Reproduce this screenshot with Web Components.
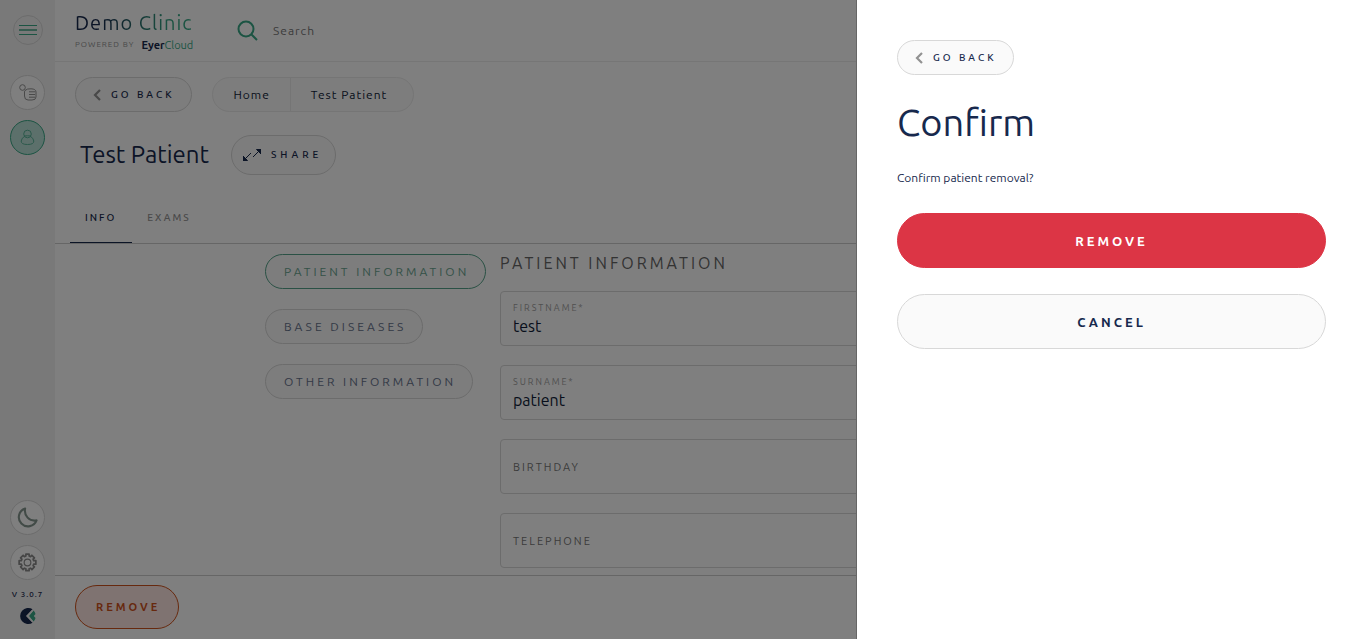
<!DOCTYPE html>
<html lang="en">
<head>
<meta charset="utf-8">
<meta name="viewport" content="width=device-width, initial-scale=1">
<title>Demo Clinic - Test Patient</title>
<style>
  :root {
    --navy: #17294d;
    --green: #38a886;
    --line: #d8d8d8;
    --pill: #fafafa;
    --danger: #dc3545;
  }
  body {
    margin: 0;
    font: 12px/16px Ubuntu, "Noto Sans", sans-serif;
    color: var(--navy);
  }
</style>
</head>
<body>
<clinic-app>
  <side-rail slot="rail"></side-rail>
  <top-bar slot="top"></top-bar>
  <patient-page></patient-page>
  <confirm-drawer slot="drawer" heading="Confirm" message="Confirm patient removal?"></confirm-drawer>
</clinic-app>

<script>
const define = (name, html) => {
  const template = document.createElement('template');
  template.innerHTML = '<style>:host,*{box-sizing:border-box}button,input{font:inherit;color:inherit;letter-spacing:inherit}svg{display:block;fill:none}</style>' + html;
  customElements.define(name, class extends HTMLElement {
    constructor() {
      super();
      this.attachShadow({ mode: 'open' }).append(template.content.cloneNode(true));
    }
    connectedCallback() {
      for (const el of this.shadowRoot.querySelectorAll('[data-text]'))
        el.textContent = this.getAttribute(el.dataset.text) || '';
      for (const el of this.shadowRoot.querySelectorAll('[data-label]'))
        el.setAttribute('aria-label', this.getAttribute('label') || '');
      const input = this.shadowRoot.querySelector('input[data-value]');
      if (input) input.value = this.getAttribute('value') || '';
    }
  });
};

define('pill-button', `
  <style>
    :host { display: inline-flex; }
    button {
      flex: 1; display: flex; align-items: center; justify-content: center; gap: 10px;
      height: 35px; padding: 0 17px; border: 1px solid var(--line); border-radius: 28px;
      background: var(--pill); color: var(--navy); font-size: 10px; line-height: 16px; font-weight: 500;
      letter-spacing: 3px; white-space: nowrap; cursor: pointer;
    }
    :host([kind=share]) button { height: 40px; padding: 0 13px 0 11px; letter-spacing: 4px; }
    :host([kind=section]) button { font-size: 12px; font-weight: 400; color: #66728c; padding: 0 16px 0 18px; }
    :host([active]) button { color: #69a490; border-color: #55a38a; }
    :host([kind=outline]) button { height: 44px; padding: 0 18px 0 20px; font-size: 11px; font-weight: 700; color: #cf531c; border-color: #cf531c; background: #ffe6e2; }
    :host([kind=wide]) button { height: 55px; font-size: 13px; font-weight: 700; }
    :host([kind=danger]) button { height: 55px; font-size: 13px; font-weight: 700; color: #fff; background: var(--danger); border-color: var(--danger); }
  </style>
  <button type="button"><slot name="icon"></slot><span><slot></slot></span></button>`);

define('back-button', `
  <style>:host { display: inline-flex; }</style>
  <pill-button>
    <svg slot="icon" width="8" height="12" viewBox="0 0 8 12" stroke="#929292" stroke-width="2.200" aria-hidden="true"><path d="M7 1L2 6L7 11"/></svg>
    GO BACK
  </pill-button>`);

define('rail-button', `
  <style>
    :host { display: block; }
    button {
      display: grid; place-items: center; width: 35px; height: 35px; padding: 0;
      border: 1px solid var(--line); border-radius: 50%; background: #fff; cursor: pointer;
    }
    :host([small]) button { width: 30px; height: 30px; background: none; }
    :host([active]) button { background: #b9e0d6; border-color: var(--green); }
  </style>
  <button type="button" data-label><slot></slot></button>`);

define('side-rail', `
  <style>
    :host {
      display: flex; flex-direction: column; align-items: center; gap: 10px;
      padding: 15px 0; background: #f2f2f2;
    }
    rail-button[small] { margin-bottom: 20px; }
    .space { flex: 1; }
    .version { font-size: 8px; line-height: 10px; font-weight: 500; letter-spacing: 1px; }
    .mark { margin-top: -2px; }
  </style>
  <rail-button small label="Menu">
    <svg width="18" height="12" viewBox="0 0 18 12" stroke="#38a886"><path d="M0 1.500H18M0 10.500H18"/><path d="M0 6H18" stroke-width="2" stroke="#6cb79f"/></svg>
  </rail-button>
  <rail-button label="Exams">
    <svg width="18" height="18" viewBox="0 0 18 18" stroke="#929292"><circle cx="3.500" cy="3.500" r="2.800"/><path d="M6 6.500Q8 4.500 12 4.800Q17 5 17 8V13Q17 16 13 16H9Q5.500 16 5.500 12V8Q5.500 7 6 6.500M10 7.800H16M10 10.500H16M10 13.200H16"/></svg>
  </rail-button>
  <rail-button active label="Patients">
    <svg width="15" height="17" viewBox="0 0 15 17" stroke="#58b398"><circle cx="7.500" cy="5" r="3.800"/><path d="M5 7Q1.500 9 1.200 12Q1 15.500 7.500 15.500Q14 15.500 13.800 12Q13.500 9 10 7M4 7Q7.500 6.500 11 7"/></svg>
  </rail-button>
  <div class="space"></div>
  <rail-button label="Dark mode">
    <svg width="21" height="21" viewBox="0 0 22 22" stroke="#84968f" stroke-width="2.200" stroke-linejoin="round"><path d="M8.500 1.500A9.600 9.600 0 1 0 20.500 14C13 15.500 7 9 8.500 1.500Z"/></svg>
  </rail-button>
  <rail-button label="Settings">
    <svg width="19" height="19" viewBox="0 0 20 20" stroke="#8c8c8c"><path stroke-width="1.800" stroke-linejoin="round" d="M8.300 1.200h3.400v2l1.500.6 1.400-1.400 2.700 2.700-1.400 1.400.6 1.500h2.300v3.800h-2.300l-.6 1.500 1.400 1.400-2.700 2.700-1.400-1.400-1.500.6v2H8.300v-2l-1.500-.6-1.400 1.400-2.700-2.700 1.400-1.400-.6-1.500H1.200V8h2.300l.6-1.500-1.400-1.400 2.700-2.700 1.400 1.400 1.500-.6z"/><circle cx="10" cy="10" r="3.500" stroke-width="1.200"/></svg>
  </rail-button>
  <div class="version">V 3.0.7</div>
  <svg class="mark" width="16" height="16" viewBox="0 0 16 16" aria-hidden="true"><path d="M12.500 1.300A8 8 0 1 0 12.500 14.700L6 8Z" fill="#17294d"/><path d="M13.500 2.500L9 8L13.500 13.500A8 8 0 0 0 15.500 10L13.800 8L15.500 6A8 8 0 0 0 13.500 2.500Z" fill="#38a886"/><path d="M12.500 2.500L7.500 8L12.500 13.500" stroke="#f2f2f2" stroke-width="1.400"/></svg>`);

define('brand-logo', `
  <style>
    :host { display: block; }
    a { display: block; color: inherit; text-decoration: none; }
    .name {
      font-size: 20px; line-height: 28px; letter-spacing: 1px; white-space: nowrap;
      background: linear-gradient(90deg, #17294d 20%, #38a886 80%); background-clip: text; color: transparent;
    }
    .by { display: flex; align-items: center; gap: 7px; font-size: 8px; line-height: 16px; letter-spacing: 1px; color: #929292; white-space: nowrap; }
    .by span { font-size: 11px; letter-spacing: 0; color: var(--green); }
    b { color: var(--navy); }
  </style>
  <a href="#home"><div class="name">Demo Clinic</div>
  <div class="by">POWERED BY <span><b>Eyer</b>Cloud</span></div></a>`);

define('top-bar', `
  <style>
    :host { display: flex; align-items: center; gap: 42px; height: 62px; padding: 0 20px; border-bottom: 1px solid #ededed; }
    brand-logo { width: 120px; }
    label { display: flex; align-items: center; gap: 15px; flex: 1; }
    input { border: 0; padding: 0; background: none; font-size: 12px; letter-spacing: 1px; outline: none; flex: 1; }
    input::placeholder { color: #777; opacity: 1; }
  </style>
  <brand-logo></brand-logo>
  <label>
    <svg width="21" height="21" viewBox="0 0 21 21" stroke="#38a886" stroke-width="2" aria-hidden="true"><circle cx="9" cy="9" r="7.500"/><path d="M14.500 14.500L20 20"/></svg>
    <input type="search" placeholder="Search" aria-label="Search">
  </label>`);

define('crumb-trail', `
  <style>
    :host { display: flex; border: 1px solid #ebebeb; border-radius: 18px; height: 35px; background: var(--pill); }
    a { display: flex; align-items: center; padding: 0 20px; font-size: 12px; letter-spacing: 1px; color: #101c38; text-decoration: none; white-space: nowrap; }
    a + a { border-left: 1px solid #ebebeb; padding-right: 26px; }
  </style>
  <a href="#home">Home</a><a href="#patient">Test Patient</a>`);

define('tab-bar', `
  <style>
    :host { display: flex; padding: 0 15px; border-bottom: 1px solid #ccc; }
    button { height: 50px; padding: 1px 16px 0 15px; border: 0; border-bottom: 1px solid transparent; background: none; font-size: 10px; font-weight: 500; letter-spacing: 2px; color: #949494; }
    button[aria-selected=true] { color: var(--navy); border-color: var(--navy); }
  </style>
  <button role="tab" aria-selected="true">INFO</button><button role="tab" aria-selected="false">EXAMS</button>`);

define('text-field', `
  <style>
    :host { display: block; }
    label { display: flex; flex-direction: column; justify-content: center; height: 55px; padding: 2px 12px 0; border: 1px solid #d8d8d8; border-radius: 4px; background: #fff; }
    span { font-size: 9px; line-height: 12px; letter-spacing: 2px; color: #a0a0a0; }
    input { width: 100%; height: 24px; padding: 0; border: 0; outline: 0; background: none; font-size: 16px; color: #101c38; }
    :host(:not([value])) label { flex-direction: row; align-items: center; padding-top: 0; }
    :host(:not([value])) span { font-size: 11px; line-height: 16px; color: #777; white-space: nowrap; }
  </style>
  <label><span data-text="label"></span><input type="text" data-value></label>`);

define('patient-page', `
  <style>
    :host { display: flex; flex-direction: column; min-height: 0; flex: 1; }
    .trail { display: flex; gap: 20px; padding: 15px 20px 0; }
    .title { display: flex; align-items: center; gap: 22px; padding: 23px 25px 18px; }
    h1 { margin: 0; font-size: 24px; line-height: 32px; font-weight: 400; }
    .scroll { flex: 1; min-height: 0; overflow: hidden auto; scrollbar-width: none; }
    .cols { display: grid; grid-template-columns: 221px 1fr; gap: 14px; max-width: 891px; margin: 0 auto; padding: 10px 0; }
    nav { display: flex; flex-direction: column; align-items: flex-start; gap: 20px; }
    h2 { margin: 0 0 19px; font-size: 16px; line-height: 18px; font-weight: 400; letter-spacing: 3px; color: #666; }
    form { display: flex; flex-direction: column; gap: 19px; }
    footer { padding: 9px 20px 10px; border-top: 1px solid #ccc; display: flex; }
  </style>
  <div class="trail"><back-button></back-button><crumb-trail></crumb-trail></div>
  <div class="title"><h1>Test Patient</h1>
    <pill-button kind="share"><svg slot="icon" width="18" height="12" viewBox="0 0 18 12" stroke="#17294d"><path d="M1 11L8 4M10 8L17 1"/><path d="M0 11.500V7L4.500 11.500ZM18 .5V5L13.500 .5Z" fill="#17294d" stroke="#17294d" stroke-linejoin="round"/></svg>SHARE</pill-button></div>
  <tab-bar role="tablist"></tab-bar>
  <div class="scroll"><div class="cols">
    <nav aria-label="Sections">
      <pill-button kind="section" active>PATIENT INFORMATION</pill-button>
      <pill-button kind="section">BASE DISEASES</pill-button>
      <pill-button kind="section">OTHER INFORMATION</pill-button>
    </nav>
    <section>
      <h2>PATIENT INFORMATION</h2>
      <form>
        <text-field label="FIRSTNAME*" value="test"></text-field>
        <text-field label="SURNAME*" value="patient"></text-field>
        <text-field label="BIRTHDAY"></text-field>
        <text-field label="TELEPHONE"></text-field>
      </form>
    </section>
  </div></div>
  <footer><pill-button kind="outline">REMOVE</pill-button></footer>`);

define('confirm-drawer', `
  <style>
    :host { display: flex; justify-content: flex-end; background: rgba(0, 0, 0, .5); }
    aside { display: flex; flex-direction: column; width: 510px; max-width: 100%; padding: 40px; background: #fff; border-left: 1px solid #666; overflow: auto; }
    back-button { align-self: flex-start; }
    h2 { margin: 23px 0 0; font-size: 38px; line-height: 48px; font-weight: 400; }
    p { margin: 24px 0 27px; font-size: 12px; line-height: 16px; }
    pill-button + pill-button { margin-top: 26px; }
  </style>
  <aside role="dialog" aria-modal="true" aria-labelledby="heading">
    <back-button></back-button>
    <h2 id="heading" data-text="heading"></h2>
    <p data-text="message"></p>
    <pill-button kind="danger">REMOVE</pill-button>
    <pill-button kind="wide">CANCEL</pill-button>
  </aside>`);

define('clinic-app', `
  <style>
    :host { display: grid; grid-template-columns: 55px minmax(0, 1fr); height: 100vh; overflow: hidden; background: #fff; }
    main { display: flex; flex-direction: column; min-height: 0; }
    ::slotted([slot=drawer]) { position: fixed; inset: 0; z-index: 1; }
  </style>
  <slot name="rail"></slot>
  <main><slot name="top"></slot><slot></slot></main>
  <slot name="drawer"></slot>`);
</script>
</body>
</html>
